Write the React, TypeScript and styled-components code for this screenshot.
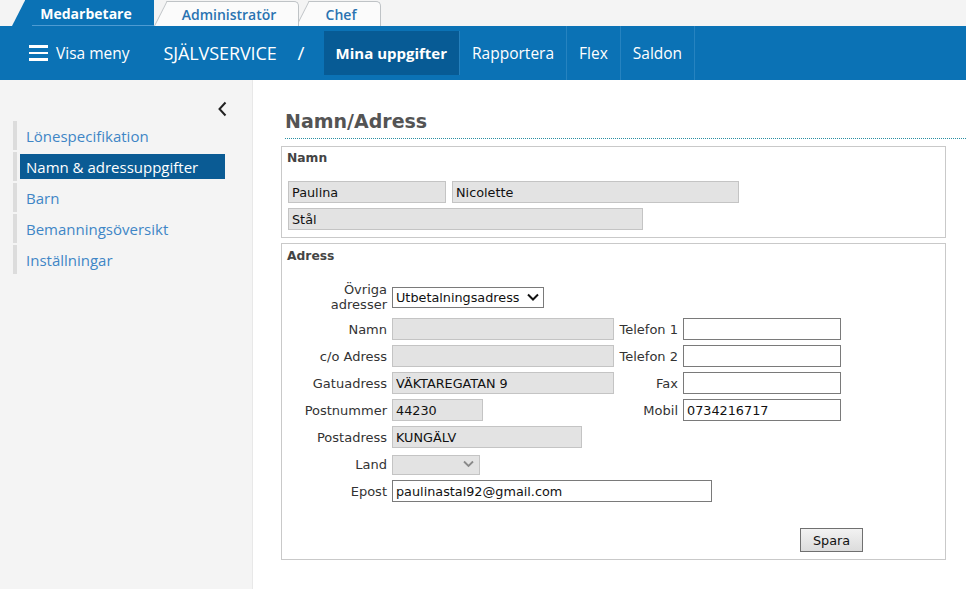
import React from "react";
import styled, { createGlobalStyle } from "styled-components";

const Global = createGlobalStyle`
  html, body { margin: 0; padding: 0; background: #ffffff; }
  body { font-family: "Open Sans", "Noto Sans", sans-serif; }
  #root { min-height: 589px; }
  * { box-sizing: border-box; }
`;

const Page = styled.div`
  display: flex;
  flex-direction: column;
  height: 589px;
  overflow: hidden;
`;

/* ---------- top tabs ---------- */
const TabStrip = styled.div`
  position: relative;
  z-index: 0;
  display: flex;
  align-items: flex-end;
  height: 26px;
  padding-left: 25px;
  background: #f4f4f4;
`;

const Tab = styled.div<{ $active?: boolean; $w: number; $gap: number }>`
  position: relative;
  width: ${(p) => p.$w}px;
  margin-left: ${(p) => p.$gap}px;
  height: ${(p) => (p.$active ? 26 : 25)}px;
  display: flex;
  align-items: center;
  justify-content: center;
  padding-right: 7px;
  font-size: 14px;
  font-weight: ${(p) => (p.$active ? 700 : 600)};
  color: ${(p) => (p.$active ? "#ffffff" : "#2a73b1")};
  background: ${(p) => (p.$active ? "#0b72b5" : "#fbfbfb")};
  border-top: ${(p) => (p.$active ? "none" : "1px solid #bfc3c6")};
  border-right: ${(p) => (p.$active ? "none" : "1px solid #bfc3c6")};
  border-top-right-radius: ${(p) => (p.$active ? 0 : 5)}px;
  &::before {
    content: "";
    position: absolute;
    z-index: -1;
    left: -13px;
    top: ${(p) => (p.$active ? 0 : -1)}px;
    bottom: 0;
    width: 24px;
    background: ${(p) => (p.$active ? "#0b72b5" : "#fbfbfb")};
    border-left: ${(p) => (p.$active ? "none" : "1px solid #bfc3c6")};
    border-top: ${(p) => (p.$active ? "none" : "1px solid #bfc3c6")};
    transform-origin: bottom left;
    transform: skewX(-27deg);
  }
  &::after {
    content: "";
    display: ${(p) => (p.$active ? "block" : "none")};
    position: absolute;
    left: 7px;
    right: 0;
    bottom: 0;
    height: 1px;
    background: #4e9bd2;
  }
`;

/* ---------- nav bar ---------- */
const NavBar = styled.nav`
  display: flex;
  align-items: stretch;
  height: 54px;
  background: #0b72b5;
  color: #ffffff;
  padding-left: 29px;
`;

const MenuToggle = styled.div`
  display: flex;
  align-items: center;
  gap: 8px;
  font-size: 15.5px;
`;

const Burger = styled.span`
  display: flex;
  flex-direction: column;
  gap: 4px;
  width: 19px;
  & > span {
    display: block;
    height: 2.5px;
    background: #ffffff;
  }
`;

const Brand = styled.div`
  display: flex;
  align-items: center;
  margin-left: 34px;
  font-size: 18px;
  letter-spacing: -0.1px;
`;

const Slash = styled.div`
  display: flex;
  align-items: center;
  margin-left: 21px;
  width: 26px;
  font-size: 19px;
`;

const NavItem = styled.div<{ $active?: boolean }>`
  display: flex;
  align-items: center;
  padding: 0 12px;
  font-size: ${(p) => (p.$active ? 15 : 15.5)}px;
  font-weight: ${(p) => (p.$active ? 700 : 400)};
  background: ${(p) => (p.$active ? "#075b95" : "transparent")};
  margin: ${(p) => (p.$active ? "5px 0" : "0")};
  border-right: 1px solid ${(p) => (p.$active ? "#2580bd" : "#2683c0")};
`;

/* ---------- body ---------- */
const Body = styled.div`
  flex: 1;
  display: flex;
  min-height: 0;
`;

const Sidebar = styled.aside`
  width: 253px;
  background: #f4f4f4;
  border-right: 1px solid #e8e8e8;
  padding-top: 21px;
`;

const CollapseRow = styled.div`
  display: flex;
  justify-content: flex-end;
  padding-right: 24px;
  height: 16px;
`;

const SideList = styled.ul`
  list-style: none;
  margin: 4px 0 0 13px;
  padding: 0;
`;

const SideItem = styled.li`
  display: flex;
  align-items: center;
  height: 29px;
  margin-bottom: 2px;
  border-left: 4px solid #dcdcdc;
  padding-left: 3px;
`;

const SideLink = styled.a<{ $active?: boolean }>`
  display: flex;
  align-items: center;
  width: 205px;
  height: 25px;
  padding-left: 6px;
  font-size: 15px;
  text-decoration: none;
  color: ${(p) => (p.$active ? "#ffffff" : "#3f86c6")};
  background: ${(p) => (p.$active ? "#0a5b94" : "transparent")};
`;

const Main = styled.main`
  flex: 1;
  padding-top: 29px;
  font-family: "DejaVu Sans", Verdana, sans-serif;
`;

const Title = styled.h1`
  margin: 0 0 7px 32px;
  padding: 0 0 5px 0;
  height: 30px;
  font-size: 19px;
  line-height: 24px;
  font-weight: 700;
  color: #545454;
  border-bottom: 1px dotted #2a8fa3;
`;

const Fieldset = styled.section<{ $pt: number; $pb: number }>`
  margin: 0 20px 5px 28px;
  border: 1px solid #c9c9c9;
  padding: ${(p) => p.$pt}px 0 ${(p) => p.$pb}px 5px;
`;

const Legend = styled.div`
  font-size: 12.3px;
  line-height: 16px;
  font-weight: 700;
  color: #444444;
`;

const NameRows = styled.div`
  margin-top: 15px;
  padding-left: 1px;
  display: flex;
  flex-direction: column;
  gap: 5px;
`;

const NameRow = styled.div`
  display: flex;
  gap: 6px;
`;

const TextInput = styled.input<{ $w: number; $ro?: boolean }>`
  width: ${(p) => p.$w}px;
  height: 22px;
  margin: 0;
  padding: 0 3px;
  font-family: "DejaVu Sans", Verdana, sans-serif;
  font-size: 12.8px;
  color: #111111;
  background: ${(p) => (p.$ro ? "#e3e3e3" : "#ffffff")};
  border: 1px solid ${(p) => (p.$ro ? "#c4c4c4" : "#7a7a7a")};
  border-radius: 0;
  outline: none;
`;

const FormGrid = styled.div`
  margin-top: 17px;
  display: grid;
  grid-template-columns: 100px 222px 59px 158px;
  grid-auto-rows: 22px;
  grid-template-rows: 32px;
  column-gap: 5px;
  row-gap: 5px;
  align-items: center;
`;

const Label = styled.label<{ $col: number }>`
  grid-column: ${(p) => p.$col};
  justify-self: end;
  text-align: right;
  font-size: 13px;
  line-height: 15px;
  color: #333333;
  white-space: nowrap;
`;

const Cell = styled.div<{ $col: number; $span?: number }>`
  grid-column: ${(p) => p.$col} / span ${(p) => p.$span ?? 1};
  display: flex;
  align-items: center;
`;

const SelectWrap = styled.div<{ $w: number; $h: number }>`
  position: relative;
  width: ${(p) => p.$w}px;
  height: ${(p) => p.$h}px;
`;

const NativeSelect = styled.select<{ $disabled?: boolean }>`
  appearance: none;
  -webkit-appearance: none;
  width: 100%;
  height: 100%;
  margin: 0;
  padding: 0 20px 0 3px;
  font-family: "DejaVu Sans", Verdana, sans-serif;
  font-size: 12.8px;
  color: #111111;
  background: ${(p) => (p.$disabled ? "#e3e3e3" : "#ffffff")};
  border: 1px solid ${(p) => (p.$disabled ? "#c4c4c4" : "#7a7a7a")};
  border-radius: 0;
  outline: none;
  opacity: 1;
`;

const Caret = styled.svg<{ $right: number }>`
  position: absolute;
  right: ${(p) => p.$right}px;
  top: 50%;
  transform: translateY(-50%);
  pointer-events: none;
`;

const ButtonRow = styled.div`
  display: flex;
  justify-content: flex-end;
  margin-top: 26px;
  padding-right: 82px;
`;

const SaveButton = styled.button`
  width: 63px;
  height: 24px;
  margin: 0;
  padding: 0;
  font-family: "DejaVu Sans", Verdana, sans-serif;
  font-size: 12.8px;
  color: #111111;
  background: linear-gradient(#f2f2f2, #dcdcdc);
  border: 1px solid #707070;
  border-radius: 0;
`;

const Chevron = () => (
  <svg width="11" height="16" viewBox="0 0 11 16">
    <polyline points="8.5,1.5 2.5,8 8.5,14.5" fill="none" stroke="#222" strokeWidth="2" />
  </svg>
);

const sideItems = [
  "Lönespecifikation",
  "Namn & adressuppgifter",
  "Barn",
  "Bemanningsöversikt",
  "Inställningar",
];

export default function App() {
  return (
    <Page>
      <Global />
      <TabStrip>
        <Tab $active $w={129} $gap={0}>Medarbetare</Tab>
        <Tab $w={132} $gap={13}>Administratör</Tab>
        <Tab $w={72} $gap={10}>Chef</Tab>
      </TabStrip>

      <NavBar>
        <MenuToggle>
          <Burger>
            <span />
            <span />
            <span />
          </Burger>
          Visa meny
        </MenuToggle>
        <Brand>SJÄLVSERVICE</Brand>
        <Slash>/</Slash>
        <NavItem $active>Mina uppgifter</NavItem>
        <NavItem>Rapportera</NavItem>
        <NavItem>Flex</NavItem>
        <NavItem>Saldon</NavItem>
      </NavBar>

      <Body>
        <Sidebar>
          <CollapseRow>
            <Chevron />
          </CollapseRow>
          <SideList>
            {sideItems.map((s) => (
              <SideItem key={s}>
                <SideLink $active={s === "Namn & adressuppgifter"}>{s}</SideLink>
              </SideItem>
            ))}
          </SideList>
        </Sidebar>

        <Main>
          <Title>Namn/Adress</Title>

          <Fieldset $pt={3} $pb={7}>
            <Legend>Namn</Legend>
            <NameRows>
              <NameRow>
                <TextInput $ro $w={158} readOnly value="Paulina" />
                <TextInput $ro $w={287} readOnly value="Nicolette" />
              </NameRow>
              <NameRow>
                <TextInput $ro $w={355} readOnly value="Stål" />
              </NameRow>
            </NameRows>
          </Fieldset>

          <Fieldset $pt={4} $pb={7}>
            <Legend>Adress</Legend>
            <FormGrid>
              <Label $col={1}>
                Övriga
                <br />
                adresser
              </Label>
              <Cell $col={2}>
                <SelectWrap $w={152} $h={21}>
                  <NativeSelect defaultValue="u">
                    <option value="u">Utbetalningsadress</option>
                  </NativeSelect>
                  <Caret $right={5} width="12" height="8" viewBox="0 0 12 8">
                    <polyline points="1,1.5 6,6.5 11,1.5" fill="none" stroke="#111" strokeWidth="2" />
                  </Caret>
                </SelectWrap>
              </Cell>

              <Label $col={1}>Namn</Label>
              <Cell $col={2}>
                <TextInput $ro $w={222} readOnly value="" />
              </Cell>
              <Label $col={3}>Telefon 1</Label>
              <Cell $col={4}>
                <TextInput $w={158} readOnly value="" />
              </Cell>

              <Label $col={1}>c/o Adress</Label>
              <Cell $col={2}>
                <TextInput $ro $w={222} readOnly value="" />
              </Cell>
              <Label $col={3}>Telefon 2</Label>
              <Cell $col={4}>
                <TextInput $w={158} readOnly value="" />
              </Cell>

              <Label $col={1}>Gatuadress</Label>
              <Cell $col={2}>
                <TextInput $ro $w={222} readOnly value="VÄKTAREGATAN 9" />
              </Cell>
              <Label $col={3}>Fax</Label>
              <Cell $col={4}>
                <TextInput $w={158} readOnly value="" />
              </Cell>

              <Label $col={1}>Postnummer</Label>
              <Cell $col={2}>
                <TextInput $ro $w={91} readOnly value="44230" />
              </Cell>
              <Label $col={3}>Mobil</Label>
              <Cell $col={4}>
                <TextInput $w={158} readOnly value="0734216717" />
              </Cell>

              <Label $col={1}>Postadress</Label>
              <Cell $col={2}>
                <TextInput $ro $w={190} readOnly value="KUNGÄLV" />
              </Cell>

              <Label $col={1}>Land</Label>
              <Cell $col={2}>
                <SelectWrap $w={88} $h={20}>
                  <NativeSelect $disabled disabled defaultValue="">
                    <option value=""></option>
                  </NativeSelect>
                  <Caret $right={6} width="11" height="7" viewBox="0 0 11 7">
                    <polyline points="1,1 5.5,5.5 10,1" fill="none" stroke="#8a8a8a" strokeWidth="1.8" />
                  </Caret>
                </SelectWrap>
              </Cell>

              <Label $col={1}>Epost</Label>
              <Cell $col={2} $span={3}>
                <TextInput $w={320} readOnly value="paulinastal92@gmail.com" />
              </Cell>
            </FormGrid>
            <ButtonRow>
              <SaveButton type="button">Spara</SaveButton>
            </ButtonRow>
          </Fieldset>
        </Main>
      </Body>
    </Page>
  );
}
